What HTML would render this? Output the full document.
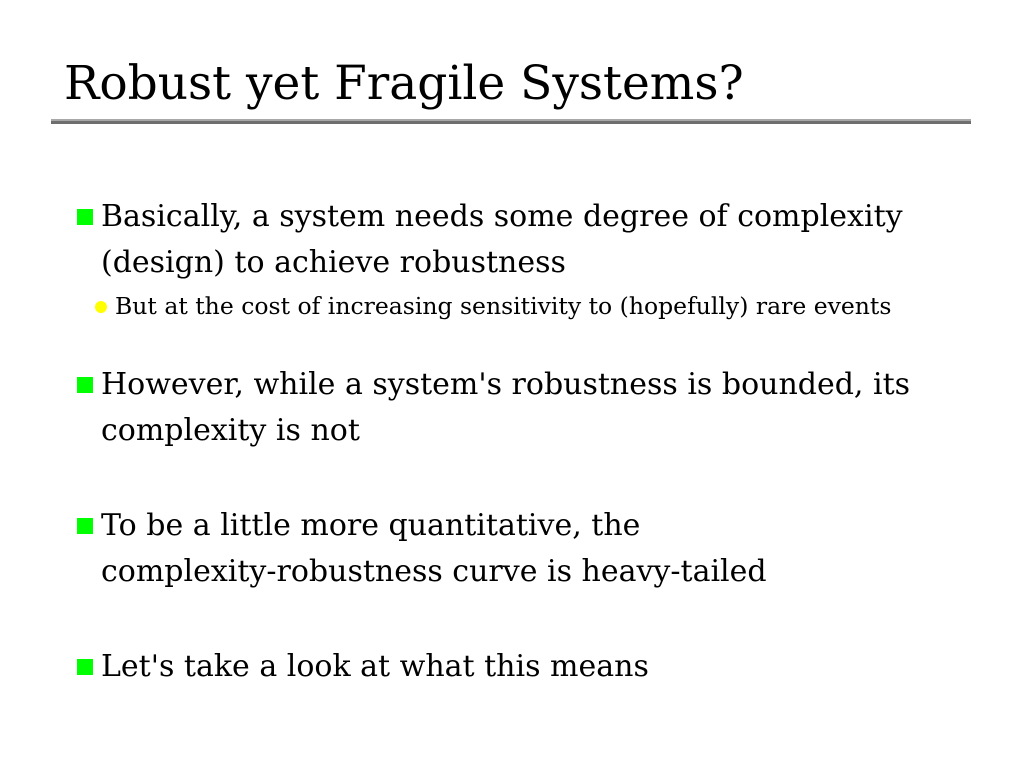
<!DOCTYPE html>
<html><head><style>
body{margin:0;width:1024px;height:768px;background:#fff;position:relative;overflow:hidden;font-family:"DejaVu Serif","Liberation Serif",serif;color:#000}
.t{position:absolute;white-space:nowrap;line-height:1}
h1{position:absolute;left:64px;top:60px;margin:0;font-weight:normal;font-size:47px;line-height:1;white-space:nowrap;letter-spacing:0}
.r1{position:absolute;left:51px;top:119px;width:920px;height:2px;background:#a8a8a8}
.r2{position:absolute;left:51px;top:121px;width:920px;height:3px;background:#6e6e6e}
.sq{position:absolute;left:77px;width:16px;height:16px;background:#00ff00}
.ci{position:absolute;left:95px;width:12px;height:12px;border-radius:50%;background:#ffff00}
.b{font-size:30px;left:101px;letter-spacing:0}
.s{font-size:23.5px;left:115px;letter-spacing:0}
</style></head><body>
<h1>Robust yet Fragile Systems?</h1>
<div class="r1"></div><div class="r2"></div>
<div class="sq" style="top:209px"></div>
<div class="t b" style="top:202px">Basically, a system needs some degree of complexity</div>
<div class="t b" style="top:248px">(design) to achieve robustness</div>
<div class="ci" style="top:301px"></div>
<div class="t s" style="top:295px">But at the cost of increasing sensitivity to (hopefully) rare events</div>
<div class="sq" style="top:377px"></div>
<div class="t b" style="top:370px">However, while a system's robustness is bounded, its</div>
<div class="t b" style="top:416px">complexity is not</div>
<div class="sq" style="top:518px"></div>
<div class="t b" style="top:511px">To be a little more quantitative, the</div>
<div class="t b" style="top:557px">complexity-robustness curve is heavy-tailed</div>
<div class="sq" style="top:659px"></div>
<div class="t b" style="top:652px">Let's take a look at what this means</div>
</body></html>
